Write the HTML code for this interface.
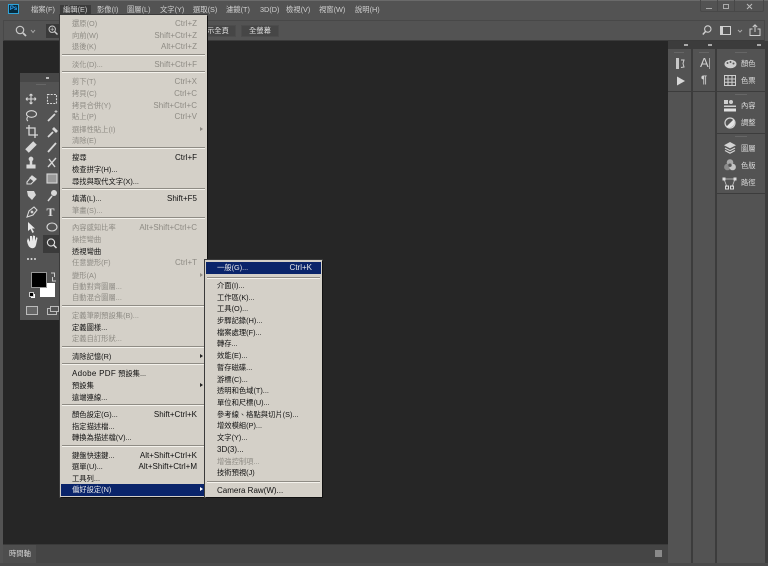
<!DOCTYPE html>
<html lang="zh-Hant">
<head>
<meta charset="utf-8">
<title>Photoshop</title>
<style>
html,body{margin:0;padding:0;background:#535353;}
body{width:768px;height:566px;position:relative;overflow:hidden;font-family:"Liberation Sans","Noto Sans CJK TC",sans-serif;font-size:7.3px;line-height:12px;}
#w{position:absolute;left:0;top:0;width:768px;height:566px;overflow:hidden;filter:blur(.35px);}
.a{position:absolute;}
.t{position:absolute;white-space:nowrap;color:#d0d0d0;margin-top:1px;}
.menu{position:absolute;background:#d4d0c8;box-shadow:1px 1px 0 #111,0 0 0 1px #3a3a3a;color:#111;}
.r{position:absolute;left:12px;right:10px;height:12px;margin-top:1px;white-space:nowrap;}
.r b{font-weight:normal;position:absolute;right:0;top:0;font-size:8px;}
.l{font-size:8px;}
.d{color:#8e8b84;}
.s{position:absolute;left:2px;right:2px;height:1px;background:#8f8c85;box-shadow:0 1px 0 #f4f2ec;}
.arr{position:absolute;right:-6px;top:3px;width:0;height:0;border-left:3px solid #222;border-top:2.5px solid transparent;border-bottom:2.5px solid transparent;}
.d .arr{border-left-color:#8e8b84;}
.h{position:absolute;background:#0a246a;}
svg{position:absolute;overflow:visible;}
</style>
</head>
<body>
<div id="w">
<!-- title bar -->
<div class="a" style="left:0;top:0;width:768px;height:1px;background:#6a6a6a"></div>
<div class="a" style="left:8px;top:4px;width:11px;height:10px;background:#062a3c;border:1px solid #2fa3d8;box-sizing:border-box;color:#31a8ff;font:bold 6px/8px 'Liberation Sans',sans-serif;text-align:center">Ps</div>
<div class="a" style="left:60px;top:5px;width:31px;height:10px;background:#3c3c3c"></div>
<div class="t" style="left:31px;top:3px">檔案(F)</div>
<div class="t" style="left:63px;top:3px">編輯(E)</div>
<div class="t" style="left:97px;top:3px">影像(I)</div>
<div class="t" style="left:127px;top:3px">圖層(L)</div>
<div class="t" style="left:160px;top:3px">文字(Y)</div>
<div class="t" style="left:193px;top:3px">選取(S)</div>
<div class="t" style="left:226px;top:3px">濾鏡(T)</div>
<div class="t" style="left:260px;top:3px">3D(D)</div>
<div class="t" style="left:286px;top:3px">檢視(V)</div>
<div class="t" style="left:319px;top:3px">視窗(W)</div>
<div class="t" style="left:355px;top:3px">說明(H)</div>
<!-- window buttons -->
<div class="a" style="left:700px;top:0;width:64px;height:12px;border:1px solid #484848;border-top:0;box-sizing:border-box;border-radius:0 0 2px 2px"></div>
<div class="a" style="left:717px;top:0;width:1px;height:12px;background:#484848"></div>
<div class="a" style="left:734px;top:0;width:1px;height:12px;background:#484848"></div>
<div class="a" style="left:706px;top:8px;width:6px;height:1px;background:#aaa"></div>
<div class="a" style="left:723px;top:4px;width:4px;height:3px;border:1px solid #aaa"></div>
<svg style="left:746px;top:3px" width="7" height="7" viewBox="0 0 7 7"><path d="M1 1L6 6M6 1L1 6" stroke="#bbb" stroke-width="1"/></svg>
<!-- option bar -->
<div class="a" style="left:3px;top:20px;width:762px;height:21px;border:1px solid #484848;border-bottom:1px solid #3a3a3a;box-sizing:border-box;background:#535353"></div>
<svg style="left:15px;top:25px" width="12" height="12" viewBox="0 0 12 12"><circle cx="5" cy="5" r="3.7" fill="none" stroke="#c8c8c8" stroke-width="1.2"/><path d="M8 8L11 11" stroke="#c8c8c8" stroke-width="1.8"/></svg>
<svg style="left:30px;top:29px" width="6" height="5" viewBox="0 0 6 5"><path d="M1 1L3 3.500L5 1" fill="none" stroke="#aaa"/></svg>
<div class="a" style="left:46px;top:24px;width:14px;height:14px;background:#3a3a3a"></div>
<svg style="left:48px;top:25px" width="10" height="10" viewBox="0 0 10 10"><circle cx="4.200" cy="4.200" r="3.200" fill="none" stroke="#ccc"/><path d="M6.500 6.500L9.500 9.500" stroke="#ccc" stroke-width="1.400"/><path d="M2.500 4.200H6M4.200 2.500V6" stroke="#ccc" stroke-width=".7"/></svg>
<div class="a" style="left:204px;top:25px;width:32px;height:12px;background:#464646;border:1px solid #4c4c4c;box-sizing:border-box"></div>
<div class="t" style="left:207px;top:24px;color:#e0e0e0">示全頁</div>
<div class="a" style="left:241px;top:25px;width:38px;height:12px;background:#464646;border:1px solid #4c4c4c;box-sizing:border-box"></div>
<div class="t" style="left:249px;top:24px;color:#e0e0e0">全螢幕</div>
<svg style="left:702px;top:25px" width="10" height="10" viewBox="0 0 10 10"><circle cx="5.800" cy="4" r="3.200" fill="none" stroke="#d0d0d0" stroke-width="1.100"/><path d="M3.500 6.500L.8 9.500" stroke="#d0d0d0" stroke-width="1.500"/></svg>
<div class="a" style="left:720px;top:26px;width:11px;height:9px;border:1px solid #cfcfcf;box-sizing:border-box;border-left-width:3px"></div>
<svg style="left:737px;top:29px" width="6" height="5" viewBox="0 0 6 5"><path d="M1 1L3 3L5 1" fill="none" stroke="#aaa"/></svg>
<svg style="left:749px;top:24px" width="12" height="12" viewBox="0 0 12 12"><path d="M3.500 5H1V11.500H11V5H8.500M6 8V1M3.800 3L6 .8L8.200 3" fill="none" stroke="#cfcfcf" stroke-width="1"/></svg>
<!-- canvas -->
<div class="a" style="left:3px;top:41px;width:665px;height:503px;background:#262626"></div>
<!-- bottom -->
<div class="a" style="left:3px;top:544px;width:665px;height:19px;background:#454545;border-top:1px solid #3a3a3a;box-sizing:border-box"></div>
<div class="a" style="left:3px;top:545px;width:33px;height:18px;background:#4e4e4e"></div>
<div class="t" style="left:9px;top:547px;color:#dcdcdc">時間軸</div>
<div class="a" style="left:655px;top:550px;width:7px;height:7px;background:#8a8a8a"></div>
<div class="a" style="left:0;top:563px;width:768px;height:3px;background:#4a4a4a"></div>
<!-- right panels -->
<div class="a" style="left:668px;top:41px;width:100px;height:522px;background:#3c3c3c"></div>
<div class="a" style="left:668px;top:49px;width:23px;height:514px;background:#535353"></div>
<div class="a" style="left:693px;top:49px;width:22px;height:514px;background:#535353"></div>
<div class="a" style="left:717px;top:49px;width:48px;height:514px;background:#535353"></div>
<div class="a" style="left:668px;top:91px;width:23px;height:1px;background:#3c3c3c"></div>
<div class="a" style="left:693px;top:91px;width:22px;height:1px;background:#3c3c3c"></div>
<div class="a" style="left:717px;top:91px;width:48px;height:1px;background:#3c3c3c"></div>
<div class="a" style="left:717px;top:133px;width:48px;height:1px;background:#3c3c3c"></div>
<div class="a" style="left:717px;top:193px;width:48px;height:1px;background:#3c3c3c"></div>
<div class="a" style="left:674px;top:52px;width:10px;height:1px;background:#666"></div>
<div class="a" style="left:699px;top:52px;width:10px;height:1px;background:#666"></div>
<div class="a" style="left:735px;top:52px;width:12px;height:1px;background:#666"></div>
<div class="a" style="left:735px;top:94px;width:12px;height:1px;background:#666"></div>
<div class="a" style="left:735px;top:136px;width:12px;height:1px;background:#666"></div>
<div class="a" style="left:684px;top:44px;width:4px;height:2px;background:#aaa"></div>
<div class="a" style="left:708px;top:44px;width:4px;height:2px;background:#aaa"></div>
<div class="a" style="left:757px;top:44px;width:4px;height:2px;background:#aaa"></div>
<!-- col1 icons -->
<div class="a" style="left:676px;top:58px;width:3px;height:11px;background:#c8c8c8"></div>
<svg style="left:680px;top:59px" width="5" height="9" viewBox="0 0 5 9"><path d="M1 1H4L3 4.500L4 8L1 8.500" fill="none" stroke="#ccc"/></svg>
<svg style="left:676px;top:76px" width="10" height="10" viewBox="0 0 10 10"><path d="M1 .5L9 5L1 9.500Z" fill="#d8d8d8"/></svg>
<!-- col2 icons -->
<div class="t" style="left:700px;top:56px;font-size:13px;color:#d0d0d0">A</div>
<div class="a" style="left:709px;top:58px;width:1px;height:11px;background:#aaa"></div>
<div class="t" style="left:701px;top:73px;font-size:11px;color:#d0d0d0;font-weight:bold">¶</div>
<!-- col3 icons -->
<svg style="left:724px;top:59px" width="13" height="10" viewBox="0 0 13 10"><ellipse cx="6.500" cy="5" rx="6" ry="4.300" fill="#cfcfcf"/><circle cx="3.500" cy="4" r="1" fill="#555"/><circle cx="6.500" cy="3" r="1" fill="#555"/><circle cx="9.500" cy="4.500" r="1" fill="#555"/></svg>
<div class="t" style="left:741px;top:57px;color:#dcdcdc">顏色</div>
<svg style="left:724px;top:75px" width="12" height="11" viewBox="0 0 12 11"><path d="M.5.5H11.500V10.500H.5ZM.5 4H11.500M.5 7.200H11.500M4 .5V10.500M8 .5V10.500" fill="none" stroke="#cfcfcf"/></svg>
<div class="t" style="left:741px;top:74px;color:#dcdcdc">色票</div>
<svg style="left:724px;top:100px" width="12" height="12" viewBox="0 0 12 12"><rect x="0" y="0" width="4" height="4" fill="#cfcfcf"/><circle cx="7" cy="2" r="2" fill="#cfcfcf"/><rect x="0" y="5.500" width="12" height="1.500" fill="#cfcfcf"/><rect x="0" y="8.500" width="12" height="3" fill="#e0e0e0"/></svg>
<div class="t" style="left:741px;top:99px;color:#dcdcdc">內容</div>
<svg style="left:724px;top:117px" width="12" height="12" viewBox="0 0 12 12"><circle cx="6" cy="6" r="5" fill="#555" stroke="#d4d4d4" stroke-width="1.200"/><path d="M9.500 2.500A5 5 0 0 1 2.500 9.500Z" fill="#e4e4e4"/></svg>
<div class="t" style="left:741px;top:116px;color:#dcdcdc">調整</div>
<svg style="left:724px;top:142px" width="12" height="12" viewBox="0 0 12 12"><path d="M6 0L12 3.200L6 6.400L0 3.200Z" fill="#d4d4d4"/><path d="M1 6L6 8.600L11 6M1 8.500L6 11.200L11 8.500" fill="none" stroke="#d4d4d4" stroke-width="1.200"/></svg>
<div class="t" style="left:741px;top:142px;color:#dcdcdc">圖層</div>
<svg style="left:724px;top:159px" width="12" height="12" viewBox="0 0 12 12"><circle cx="6" cy="3.500" r="3.300" fill="#a8a8a8"/><circle cx="3.400" cy="8" r="3.300" fill="#8c8c8c"/><circle cx="8.600" cy="8" r="3.300" fill="#c4c4c4"/><circle cx="6" cy="6.200" r="1.700" fill="#555"/></svg>
<div class="t" style="left:741px;top:159px;color:#dcdcdc">色版</div>
<svg style="left:722px;top:177px" width="15" height="12" viewBox="0 0 15 12"><path d="M2 2H13M2 2L5 10M13 2L10 10" fill="none" stroke="#c8c8c8" stroke-width=".8"/><rect x=".5" y=".5" width="3" height="3" fill="#dcdcdc"/><rect x="11.500" y=".5" width="3" height="3" fill="#dcdcdc"/><rect x="3.500" y="9" width="3" height="3" fill="none" stroke="#dcdcdc"/><rect x="8.500" y="9" width="3" height="3" fill="none" stroke="#dcdcdc"/></svg>
<div class="t" style="left:741px;top:176px;color:#dcdcdc">路徑</div>
<!-- tools panel -->
<div class="a" style="left:20px;top:73px;width:42px;height:247px;background:#535353"></div>
<div class="a" style="left:20px;top:73px;width:42px;height:9px;background:#474747"></div>
<div class="a" style="left:46px;top:77px;width:3px;height:2px;background:#bbb"></div>
<div class="a" style="left:36px;top:84px;width:10px;height:1px;background:#666"></div>
<svg style="left:20px;top:90px" width="42" height="230" viewBox="0 0 42 230">
<rect x="23" y="145" width="19" height="18" fill="#3a3a3a"/>
<g fill="none" stroke="#d8d8d8" stroke-width="1.100">
<path d="M11 4V14M6 9H16M11 4L9.500 5.500M11 4L12.500 5.500M11 14L9.500 12.500M11 14L12.500 12.500M6 9L7.500 7.500M6 9L7.500 10.500M16 9L14.500 7.500M16 9L14.500 10.500"/>
<rect x="27.500" y="4.500" width="9" height="9" stroke-dasharray="2 1.200"/>
<ellipse cx="11.500" cy="24" rx="5" ry="3.300"/><path d="M7.500 27Q6 30 8 31"/>
<path d="M28 31L35 24" stroke-width="1.800"/><path d="M36 20V23M34.500 21.500H37.500" stroke-width=".8"/>
<path d="M9 35V45H18M6 38H15V48" stroke-width="1.300"/>
<path d="M28 47L33 42" stroke-width="1.800"/><path d="M33 38L37 42" stroke-width="2.800"/>
<path d="M7 61L15 53" stroke-width="5"/>
<path d="M28 62L36 53" stroke-width="1.800"/>
<path d="M7 78H15V75H7Z" fill="#d8d8d8"/><path d="M11 70V75" stroke-width="2.500"/><circle cx="11" cy="69" r="1.800" fill="#d8d8d8"/>
<path d="M28 77L36 68M29 69L35 77" stroke-width="1.400"/>
<path d="M7 92L12 86L16 89L11 94H7Z"/><path d="M12 86L16 89L14 91L10 88Z" fill="#d8d8d8"/>
<rect x="27" y="84" width="10" height="9" fill="#999"/>
<path d="M7 101H14L16 105L12 110L8 106Z" fill="#d8d8d8" stroke="none"/>
<circle cx="34" cy="103" r="3" fill="#d8d8d8" stroke="none"/><path d="M32 106L28 111" stroke-width="1.500"/>
<path d="M7 127L9 121L14 117L17 120L13 125Z"/><circle cx="12" cy="122" r=".8"/>
<path d="M8 132V141L10.500 139L12.500 143L14 142L12 138.500H15Z" fill="#e8e8e8" stroke="none"/>
<ellipse cx="32" cy="137" rx="5" ry="4"/>
</g>
<text x="26.500" y="126" fill="#e0e0e0" font-family="Liberation Serif" font-size="12" font-weight="bold">T</text>
<path d="M7 151L8 148L10 152V146L12 146V151L13 145.500L15 146V151L16.500 147L17.500 148L16 155Q15 159 11 158Q8 157 7 151Z" fill="#e8e8e8"/>
<circle cx="31" cy="152.500" r="3.600" fill="none" stroke="#e0e0e0" stroke-width="1.100"/><path d="M33.700 155.200L36.500 158" stroke="#e0e0e0" stroke-width="1.500"/>
<circle cx="8" cy="169" r="1" fill="#ddd"/><circle cx="11.500" cy="169" r="1" fill="#ddd"/><circle cx="15" cy="169" r="1" fill="#ddd"/>
<path d="M31 183H34.500V187M36 191H32.500V187" fill="none" stroke="#ccc"/>
</svg>
<div class="a" style="left:40px;top:283px;width:15px;height:14px;background:#fff"></div>
<div class="a" style="left:31px;top:272px;width:14px;height:14px;background:#000;border:1px solid #999"></div>
<div class="a" style="left:31px;top:294px;width:4px;height:4px;background:#fff"></div>
<div class="a" style="left:29px;top:292px;width:3px;height:3px;background:#000;border:1px solid #ccc"></div>
<div class="a" style="left:26px;top:306px;width:10px;height:7px;border:1px solid #bbb;background:#666"></div>
<div class="a" style="left:47px;top:308px;width:8px;height:5px;border:1px solid #bbb"></div>
<div class="a" style="left:50px;top:306px;width:7px;height:4px;border:1px solid #bbb;background:#535353"></div>

<!-- edit menu -->
<div class="menu" style="left:60px;top:15px;width:147px;height:482px">
 <div class="r d" style="top:2px">還原(O)<b>Ctrl+Z</b></div>
 <div class="r d" style="top:14px">向前(W)<b>Shift+Ctrl+Z</b></div>
 <div class="r d" style="top:25px">退後(K)<b>Alt+Ctrl+Z</b></div>
 <div class="s" style="top:39px"></div>
 <div class="r d" style="top:43px">淡化(D)...<b>Shift+Ctrl+F</b></div>
 <div class="s" style="top:56px"></div>
 <div class="r d" style="top:60px">剪下(T)<b>Ctrl+X</b></div>
 <div class="r d" style="top:72px">拷貝(C)<b>Ctrl+C</b></div>
 <div class="r d" style="top:84px">拷貝合併(Y)<b>Shift+Ctrl+C</b></div>
 <div class="r d" style="top:95px">貼上(P)<b>Ctrl+V</b></div>
 <div class="r d" style="top:108px">選擇性貼上(I)<i class="arr"></i></div>
 <div class="r d" style="top:119px">清除(E)</div>
 <div class="s" style="top:132px"></div>
 <div class="r" style="top:136px">搜尋<b>Ctrl+F</b></div>
 <div class="r" style="top:148px">檢查拼字(H)...</div>
 <div class="r" style="top:160px">尋找與取代文字(X)...</div>
 <div class="s" style="top:173px"></div>
 <div class="r" style="top:177px">填滿(L)...<b>Shift+F5</b></div>
 <div class="r d" style="top:189px">筆畫(S)...</div>
 <div class="s" style="top:202px"></div>
 <div class="r d" style="top:206px">內容感知比率<b>Alt+Shift+Ctrl+C</b></div>
 <div class="r d" style="top:218px">操控彎曲</div>
 <div class="r" style="top:230px">透視彎曲</div>
 <div class="r d" style="top:241px">任意變形(F)<b>Ctrl+T</b></div>
 <div class="r d" style="top:254px">變形(A)<i class="arr"></i></div>
 <div class="r d" style="top:265px">自動對齊圖層...</div>
 <div class="r d" style="top:276px">自動混合圖層...</div>
 <div class="s" style="top:290px"></div>
 <div class="r d" style="top:294px">定義筆刷預設集(B)...</div>
 <div class="r" style="top:306px">定義圖樣...</div>
 <div class="r d" style="top:317px">定義自訂形狀...</div>
 <div class="s" style="top:331px"></div>
 <div class="r" style="top:335px">清除記憶(R)<i class="arr"></i></div>
 <div class="s" style="top:348px"></div>
 <div class="r" style="top:352px"><span class="l" style="letter-spacing:.3px">Adobe PDF</span> 預設集...</div>
 <div class="r" style="top:364px">預設集<i class="arr"></i></div>
 <div class="r" style="top:376px">遠端連線...</div>
 <div class="s" style="top:389px"></div>
 <div class="r" style="top:393px">顏色設定(G)...<b>Shift+Ctrl+K</b></div>
 <div class="r" style="top:405px">指定描述檔...</div>
 <div class="r" style="top:416px">轉換為描述檔(V)...</div>
 <div class="s" style="top:430px"></div>
 <div class="r" style="top:434px">鍵盤快速鍵...<b>Alt+Shift+Ctrl+K</b></div>
 <div class="r" style="top:445px">選單(U)...<b>Alt+Shift+Ctrl+M</b></div>
 <div class="r" style="top:457px">工具列...</div>
 <div class="h" style="left:1px;right:1px;top:469px;height:12px"></div>
 <div class="r" style="top:469px;margin-top:0;color:#e8e8e8">偏好設定(N)<i class="arr" style="border-left-color:#fff"></i></div>
</div>

<!-- preferences submenu -->
<div class="menu" style="left:205px;top:260px;width:117px;height:237px">
 <div class="h" style="left:1px;right:1px;top:2px;height:12px"></div>
 <div class="r" style="top:2px;margin-top:0;color:#e8e8e8">一般(G)...<b>Ctrl+K</b></div>
 <div class="s" style="top:17px"></div>
 <div class="r" style="top:19px">介面(I)...</div>
 <div class="r" style="top:31px">工作區(K)...</div>
 <div class="r" style="top:42px">工具(O)...</div>
 <div class="r" style="top:54px">步驟記錄(H)...</div>
 <div class="r" style="top:66px">檔案處理(F)...</div>
 <div class="r" style="top:77px">轉存...</div>
 <div class="r" style="top:89px">效能(E)...</div>
 <div class="r" style="top:101px">暫存磁碟...</div>
 <div class="r" style="top:113px">游標(C)...</div>
 <div class="r" style="top:124px">透明和色域(T)...</div>
 <div class="r" style="top:136px">單位和尺標(U)...</div>
 <div class="r" style="top:148px">參考線、格點與切片(S)...</div>
 <div class="r" style="top:159px">增效模組(P)...</div>
 <div class="r" style="top:171px">文字(Y)...</div>
 <div class="r" style="top:183px"><span class="l">3D(3)...</span></div>
 <div class="r d" style="top:195px">增強控制項...</div>
 <div class="r" style="top:206px">技術預視(J)</div>
 <div class="s" style="top:221px"></div>
 <div class="r" style="top:224px"><span class="l">Camera Raw(W)...</span></div>
</div>
</div>
</body>
</html>
